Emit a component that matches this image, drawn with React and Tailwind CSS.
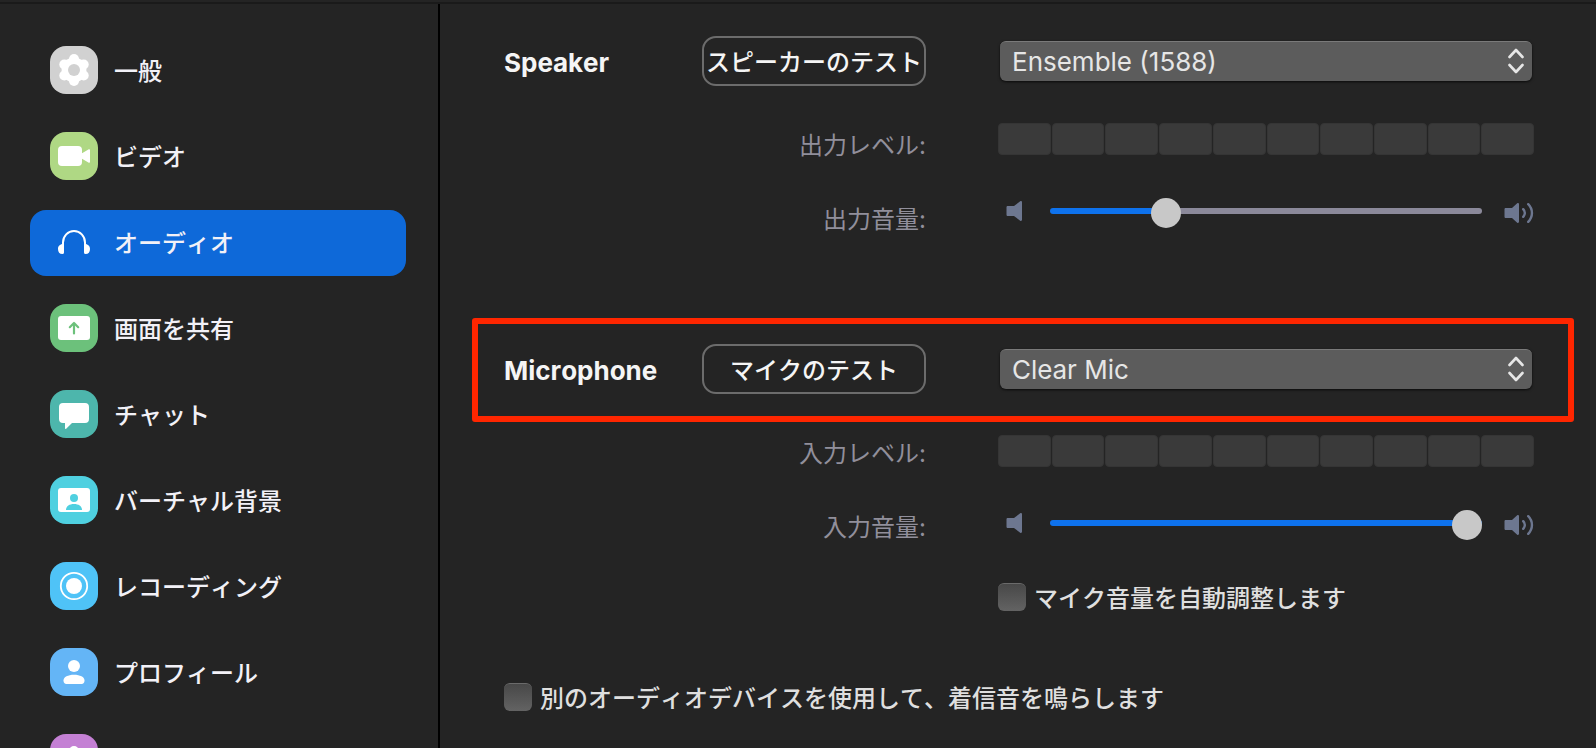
import React, { useState } from "react";

const GearIcon = () => (
  <svg viewBox="0 0 48 48" className="size-12" aria-hidden="true">
    <g fill="#fff">
      <circle cx="24" cy="24" r="12.4" />
      <circle cx="24" cy="13" r="5" />
      <circle cx="33.7" cy="18.5" r="5" />
      <circle cx="33.7" cy="29.5" r="5" />
      <circle cx="24" cy="35" r="5" />
      <circle cx="14.3" cy="29.5" r="5" />
      <circle cx="14.3" cy="18.5" r="5" />
    </g>
    <circle cx="24" cy="24" r="6" fill="#d1d1d1" />
  </svg>
);

const VideoIcon = () => (
  <svg viewBox="0 0 48 48" className="size-12" fill="#fff" aria-hidden="true">
    <rect x="8" y="14" width="24" height="20" rx="4" />
    <path d="M32 21.2l6.4-3.8c.8-.5 1.6 0 1.6.8v11.6c0 .8-.8 1.3-1.6.8L32 26.8z" />
  </svg>
);

const HeadphonesIcon = () => (
  <svg viewBox="0 0 48 48" className="size-12" aria-hidden="true">
    <path d="M13 28v-3.5a11 11.5 0 0 1 22 0V28" fill="none" stroke="#fff" strokeWidth="2" />
    <path d="M14 25.5v9a1.6 1.6 0 0 1-1.6 1.6C9.5 36.1 8 34 8 31s1.5-4.5 6-5.5z" fill="#fff" />
    <path d="M34 25.5v9a1.6 1.6 0 0 0 1.6 1.6C38.5 36.1 40 34 40 31s-1.5-4.5-6-5.5z" fill="#fff" />
  </svg>
);

const ShareIcon = () => (
  <svg viewBox="0 0 48 48" className="size-12" aria-hidden="true">
    <rect x="8" y="12" width="32" height="24" rx="3" fill="#fff" />
    <path
      d="M24 29.5V19.2M19.8 23.2l4.2-4.2 4.2 4.2"
      fill="none"
      stroke="#6cc17b"
      strokeWidth="2.2"
      strokeLinejoin="round"
      strokeLinecap="round"
    />
  </svg>
);

const ChatIcon = () => (
  <svg viewBox="0 0 48 48" className="size-12" fill="#fff" aria-hidden="true">
    <path d="M13 13h22a4 4 0 0 1 4 4v12a4 4 0 0 1-4 4H22l-5.8 5.7c-.5.5-1.2.2-1.2-.5V33h-2a4 4 0 0 1-4-4V17a4 4 0 0 1 4-4z" />
  </svg>
);

const BackgroundIcon = () => (
  <svg viewBox="0 0 48 48" className="size-12" aria-hidden="true">
    <rect x="8" y="12" width="32" height="24" rx="3" fill="#fff" />
    <circle cx="24" cy="22" r="4" fill="#4fd0e0" />
    <path d="M16 34c0-4 3.5-6 8-6s8 2 8 6z" fill="#4fd0e0" />
  </svg>
);

const RecordIcon = () => (
  <svg viewBox="0 0 48 48" className="size-12" aria-hidden="true">
    <circle cx="24" cy="24" r="13.2" fill="none" stroke="#fff" strokeWidth="1.8" />
    <circle cx="24" cy="24" r="8" fill="#fff" />
  </svg>
);

const ProfileIcon = () => (
  <svg viewBox="0 0 48 48" className="size-12" fill="#fff" aria-hidden="true">
    <circle cx="24" cy="18" r="6" />
    <path d="M13.5 32.5c0-3.5 4.5-5.7 10.5-5.7s10.5 2.2 10.5 5.7c0 2.3-1 3.5-3 3.5h-15c-2 0-3-1.2-3-3.5z" />
  </svg>
);

const StatsIcon = () => (
  <svg viewBox="0 0 48 48" className="size-12" fill="#fff" aria-hidden="true">
    <circle cx="24" cy="17" r="5" />
    <rect x="14" y="24" width="20" height="12" rx="3" />
  </svg>
);

const SpeakerLow = () => (
  <svg viewBox="0 0 16 20" className="h-5 w-4 shrink-0" fill="#6d7790" aria-hidden="true">
    <path d="M1.8 5H8l6.2-4.7c.8-.5 1.8-.1 1.8.9v17.6c0 1-1 1.4-1.8.9L8 15H1.8C1 15 .5 14.5.5 13.7V6.3C.5 5.5 1 5 1.8 5z" />
  </svg>
);

const SpeakerHigh = () => (
  <svg viewBox="0 0 30 20" className="mt-1 h-5 w-[30px] shrink-0" aria-hidden="true">
    <path
      fill="#6d7790"
      d="M1.8 5H8l5.2-4.7c.8-.5 1.8-.1 1.8.9v17.6c0 1-1 1.4-1.8.9L8 15H1.8C1 15 .5 14.5.5 13.7V6.3C.5 5.5 1 5 1.8 5z"
    />
    <path
      d="M19.2 6.2c2.2 2.2 2.2 5.4 0 7.6M24.2 1.2c5 5 5 12.6 0 17.6"
      fill="none"
      stroke="#6d7790"
      strokeWidth="2.4"
      strokeLinecap="round"
    />
  </svg>
);

const menu = [
  { id: "general", label: "一般", icon: GearIcon, color: "bg-[#d1d1d1]" },
  { id: "video", label: "ビデオ", icon: VideoIcon, color: "bg-[#afd884]" },
  { id: "audio", label: "オーディオ", icon: HeadphonesIcon, color: "bg-transparent" },
  { id: "share", label: "画面を共有", icon: ShareIcon, color: "bg-[#6cc17b]" },
  { id: "chat", label: "チャット", icon: ChatIcon, color: "bg-[#4db6ac]" },
  { id: "background", label: "バーチャル背景", icon: BackgroundIcon, color: "bg-[#4fd0e0]" },
  { id: "recording", label: "レコーディング", icon: RecordIcon, color: "bg-[#4fc3f7]" },
  { id: "profile", label: "プロフィール", icon: ProfileIcon, color: "bg-[#64b5f6]" },
  { id: "stats", label: "", icon: StatsIcon, color: "bg-[#c480d4]" },
];

const Sidebar = () => {
  const [active, setActive] = useState("audio");

  return (
    <nav className="w-[440px] shrink-0 overflow-hidden border-r-2 border-black pt-[34px] pr-8 pl-[30px]">
      <ul className="flex flex-col gap-5">
        {menu.map(({ id, label, icon: Icon, color }) => (
          <li key={id}>
            <button
              type="button"
              aria-label={label || id}
              onClick={() => setActive(id)}
              className={`flex w-full items-center gap-4 rounded-2xl px-5 pt-2 pb-2.5 text-left text-2xl font-medium text-[#f2f1f7] ${
                active === id ? "bg-[#0e69d9]" : ""
              }`}
            >
              <span className={`size-12 shrink-0 overflow-hidden rounded-2xl ${color}`}>
                <Icon />
              </span>
              <span className="pt-1">{label}</span>
            </button>
          </li>
        ))}
      </ul>
    </nav>
  );
};

const DeviceRow = ({ title, testLabel, device }) => (
  <div className="flex items-center">
    <h2 className="w-[198px] shrink-0 pt-1 text-[26px] leading-8 font-bold text-[#f5f5f5]">
      {title}
    </h2>
    <button
      type="button"
      className="h-[50px] w-56 shrink-0 rounded-[14px] border-2 border-[#6c6c6c] pt-1 text-2xl font-medium whitespace-nowrap text-[#f5f5f5]"
    >
      {testLabel}
    </button>
    <div className="relative mr-0.5 ml-[74px] flex-1">
      <select
        aria-label={title}
        className="block h-10 w-full appearance-none rounded-md border-t border-[#7a7a7a] bg-[#5c5c5c] pr-10 pl-3 text-[26px] leading-8 text-[#e6e6e6] shadow-sm shadow-black/60 outline-none"
      >
        <option>{device}</option>
      </select>
      <svg
        viewBox="0 0 16 26"
        className="pointer-events-none absolute top-[7px] right-2 h-[26px] w-4"
        fill="none"
        stroke="#e6e6e6"
        strokeWidth="2.6"
        strokeLinecap="round"
        strokeLinejoin="round"
        aria-hidden="true"
      >
        <path d="M1.5 9L8 2l6.5 7M1.5 17L8 24l6.5-7" />
      </svg>
    </div>
  </div>
);

const LevelMeter = () => (
  <div className="flex h-8 gap-px">
    {Array.from({ length: 10 }).map((_, i) => (
      <div key={i} className="flex-1 rounded-sm border border-[#353535] bg-[#3a3a3a]"></div>
    ))}
  </div>
);

const VolumeSlider = ({ id, initial }) => {
  const [volume, setVolume] = useState(initial);

  return (
    <div className="flex h-7 items-center pl-2">
      <SpeakerLow />
      <input
        id={id}
        type="range"
        min="0"
        max="100"
        value={volume}
        onChange={(e) => setVolume(Number(e.target.value))}
        style={{ "--fill": `${volume}%` }}
        className="mr-[22px] ml-7 h-7 min-w-0 flex-1 appearance-none bg-transparent [&::-webkit-slider-runnable-track]:h-1.5 [&::-webkit-slider-runnable-track]:rounded-full [&::-webkit-slider-runnable-track]:bg-[linear-gradient(to_right,#0e72ed_var(--fill),#8b899a_var(--fill))] [&::-webkit-slider-thumb]:-mt-2.5 [&::-webkit-slider-thumb]:size-[30px] [&::-webkit-slider-thumb]:appearance-none [&::-webkit-slider-thumb]:rounded-full [&::-webkit-slider-thumb]:bg-[#c8c8c8]"
      />
      <SpeakerHigh />
    </div>
  );
};

const Checkbox = ({ id, label }) => (
  <div className="flex items-center gap-2">
    <input
      id={id}
      type="checkbox"
      className="size-7 shrink-0 appearance-none rounded-md border-t border-[#6a6a6a] bg-linear-to-b from-[#484848] to-[#636363] checked:from-[#0e72ed] checked:to-[#0e69d9]"
    />
    <label htmlFor={id} className="pt-1 text-2xl leading-9 font-medium text-[#dfdfdf]">
      {label}
    </label>
  </div>
);

const DeviceDetails = ({ id, levelLabel, volumeLabel, initial, labelsClass = "", children }) => (
  <div className="flex items-start">
    <div
      className={`flex w-[422px] shrink-0 flex-col gap-9 text-right text-2xl leading-[38px] text-[#918f9b] ${labelsClass}`}
    >
      <span>{levelLabel}</span>
      <label htmlFor={id}>{volumeLabel}</label>
    </div>
    <div className="ml-[72px] min-w-0 flex-1">
      <LevelMeter />
      <div className="mt-[42px]">
        <VolumeSlider id={id} initial={initial} />
      </div>
      {children}
    </div>
  </div>
);

const App = () => {
  return (
    <div
      lang="ja"
      className="flex h-screen flex-col overflow-hidden bg-[#242424] font-['Inter','Noto_Sans_CJK_JP',sans-serif] [font-kerning:none]"
    >
      <div className="h-1 shrink-0 border-b-2 border-[#1a1a1a]"></div>
      <div className="flex min-h-0 flex-1">
        <Sidebar />

        <main className="min-w-0 flex-1 overflow-hidden pt-8 pr-[62px] pl-16">
          <section>
            <DeviceRow title="Speaker" testLabel="スピーカーのテスト" device="Ensemble (1588)" />
            <div className="mt-[37px]">
              <DeviceDetails
                id="output-volume"
                levelLabel="出力レベル:"
                volumeLabel="出力音量:"
                initial={25}
                labelsClass="pt-1"
              />
            </div>
          </section>

          <section className="mt-[79px]">
            {/* Highlighted device row */}
            <div className="-mr-10 -ml-8 rounded-[3px] border-[6px] border-[#ff2600] pt-5 pr-[34px] pb-[22px] pl-[26px]">
              <DeviceRow title="Microphone" testLabel="マイクのテスト" device="Clear Mic" />
            </div>
            <div className="mt-[13px]">
              <DeviceDetails
                id="input-volume"
                levelLabel="入力レベル:"
                volumeLabel="入力音量:"
                initial={100}
              >
                <div className="mt-10">
                  <Checkbox id="auto-adjust" label="マイク音量を自動調整します" />
                </div>
              </DeviceDetails>
            </div>
          </section>

          <div className="mt-15">
            <Checkbox
              id="ring-device"
              label="別のオーディオデバイスを使用して、着信音を鳴らします"
            />
          </div>
        </main>
      </div>
    </div>
  );
};

export default App;
